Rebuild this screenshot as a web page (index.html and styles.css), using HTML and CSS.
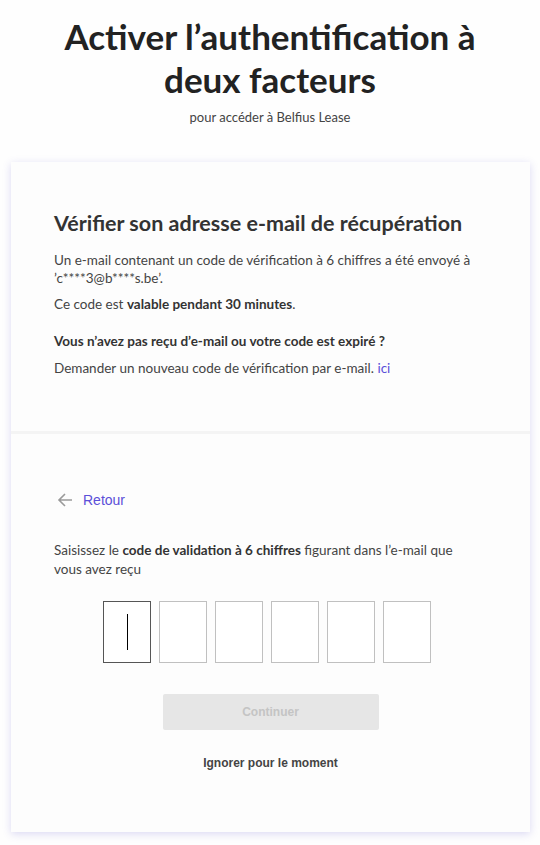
FILE: index.html
```html
<!DOCTYPE html>
<html lang="fr">
<head>
    <meta charset="UTF-8">
    <meta name="viewport" content="width=device-width, initial-scale=1.0">
    <title>Activer l'authentification à deux facteurs</title>
    <link rel="stylesheet" href="styles.css">
</head>
<body>

<header class="page-head">
    <h1>Activer l’authentification à deux facteurs</h1>
    <p>pour accéder à Belfius Lease</p>
</header>

<main class="card">
    <section class="card-top">
        <h2>Vérifier son adresse e-mail de récupération</h2>
        <p>Un e-mail contenant un code de vérification à 6 chiffres a été envoyé à ’c****3@b****s.be’.</p>
        <p>Ce code est <strong>valable pendant 30 minutes</strong>.</p>
        <p class="question"><strong>Vous n’avez pas reçu d’e-mail ou votre code est expiré ?</strong></p>
        <p>Demander un nouveau code de vérification par e-mail. <a href="#">ici</a></p>
    </section>

    <section class="card-bottom">
        <a href="#" class="back">
            <svg width="16" height="16" viewBox="0 0 16 16" fill="none" stroke="#9a9a9a" stroke-width="1.6">
                <path d="M15 8H2M8 2L2 8l6 6"/>
            </svg>
            Retour
        </a>
        <p class="hint">Saisissez le <strong>code de validation à 6 chiffres</strong> figurant dans l’e-mail que vous avez reçu</p>
        <div class="code-boxes">
            <div class="box active"><span class="caret"></span></div>
            <div class="box"></div>
            <div class="box"></div>
            <div class="box"></div>
            <div class="box"></div>
            <div class="box"></div>
        </div>
        <button class="continue" disabled>Continuer</button>
        <a href="#" class="skip">Ignorer pour le moment</a>
    </section>
</main>

</body>
</html>
```

FILE: styles.css
```css
body {
    margin: 0;
    padding: 0;
    background-color: #fefefe;
    color: #333;
    font-family: Lato, "Open Sans", sans-serif;
}
.page-head {
    text-align: center;
    padding: 15px 20px 0;
}
.page-head h1 {
    max-width: 440px;
    margin: 0 auto;
    font-size: 35px;
    line-height: 43px;
    font-weight: 700;
    color: #222;
}
.page-head p {
    margin: 8px 0 0;
    font-size: 13px;
    color: #444;
}
.card {
    margin: 37px 10px 13px 11px;
    background-color: #fdfdfd;
    box-shadow: 0 2px 8px rgba(90, 80, 200, 0.22);
}
.card-top {
    padding: 48px 43px 46px;
    border-bottom: 3px solid #f4f4f4;
}
.card-top h2 {
    margin: 0 0 15px;
    font-size: 21.5px;
    font-weight: 700;
    color: #333;
}
.card-top p {
    margin: 0 0 8px;
    font-size: 13.5px;
    line-height: 18px;
    color: #444;
}
.card-top p.question {
    margin-top: 19px;
    margin-bottom: 9px;
}
.card-top strong {
    color: #333;
}
.card-top a {
    color: #5b4fd8;
    text-decoration: none;
}
.card-bottom {
    padding: 58px 43px 62px;
    text-align: center;
}
.back {
    display: flex;
    align-items: center;
    gap: 10px;
    padding-left: 3px;
    color: #5b4fd8;
    text-decoration: none;
    font-family: "Liberation Sans", Arial, sans-serif;
    font-size: 14px;
}
.hint {
    max-width: 420px;
    text-align: left;
    margin: 33px 0 0;
    font-size: 13.5px;
    line-height: 19px;
    color: #444;
}
.hint strong {
    color: #333;
}
.code-boxes {
    display: flex;
    justify-content: center;
    gap: 8px;
    margin-top: 22px;
    padding-right: 7px;
}
.box {
    width: 46px;
    height: 60px;
    border: 1px solid #c0c0c0;
    background-color: #fff;
    display: flex;
    align-items: center;
    justify-content: center;
}
.box.active {
    border-color: #555;
}
.caret {
    width: 1px;
    height: 36px;
    background-color: #000;
}
.continue {
    display: block;
    margin: 31px auto 0;
    width: 216px;
    height: 36px;
    border: none;
    border-radius: 2px;
    background-color: #e6e6e6;
    color: #c4c4c4;
    font-family: "Liberation Sans", Arial, sans-serif;
    font-size: 12px;
    font-weight: 700;
}
.skip {
    display: inline-block;
    margin-top: 26px;
    color: #444;
    text-decoration: none;
    font-family: "Liberation Sans", Arial, sans-serif;
    font-size: 12px;
    font-weight: 700;
}
```
